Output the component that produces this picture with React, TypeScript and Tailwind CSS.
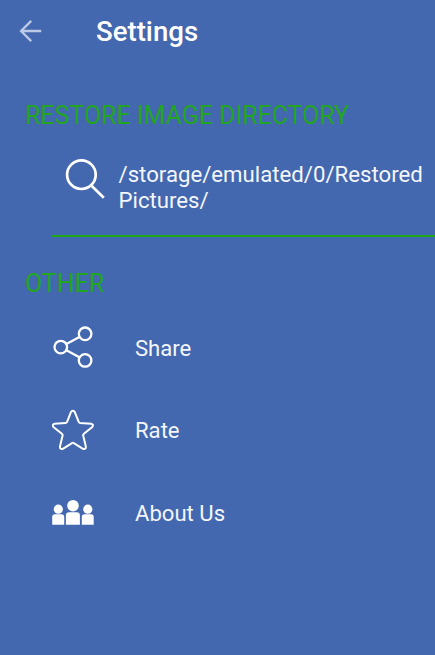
import React from "react";

function BackIcon() {
  return (
    <svg className="h-6 w-6 shrink-0" viewBox="0 0 24 24" fill="none" stroke="#bdcae5" strokeWidth="2.3">
      <path d="M23.2 12H3.2M13.2 1.9L3.1 12l10.1 10.1" />
    </svg>
  );
}

function SearchIcon() {
  return (
    <svg className="h-[42px] w-[42px] shrink-0" viewBox="0 0 42 42" fill="none" stroke="white" strokeWidth="2.7">
      <circle cx="17.4" cy="16.7" r="14.3" />
      <path d="M27 27.3L39.8 39.8" />
    </svg>
  );
}

function ShareIcon() {
  return (
    <svg className="h-[42px] w-[42px] shrink-0" viewBox="0 0 42 42" fill="none" stroke="white" strokeWidth="2.3">
      <circle cx="8.8" cy="21.1" r="6.3" />
      <circle cx="33.1" cy="7.8" r="6.3" />
      <circle cx="33.1" cy="34.4" r="6.3" />
      <path d="M14.4 17.9L27.4 10.9M14.4 24.3l13 7" />
    </svg>
  );
}

function StarIcon() {
  return (
    <svg className="h-[42px] w-[42px] shrink-0" viewBox="0 0 42 42" fill="none" stroke="white" strokeWidth="2" strokeLinejoin="round">
      <path d="M19 2.8Q20.9 .6 22.7 2.8L26.8 13.1Q27 13.8 28 13.9L39.2 14.7Q42 15.5 40.3 17.9L31.6 25.1Q31 25.7 31.2 26.6L33.9 37.7Q33.9 40.7 31 39.8L21.8 34.1Q20.9 33.6 20 34.1L10.8 39.8Q7.9 40.7 7.9 37.7L10.6 26.6Q10.8 25.7 10.2 25.1L1.4 17.9Q-.2 15.5 2.5 14.7L13.7 13.9Q14.8 13.8 15 13.1Z" />
    </svg>
  );
}

function PeopleIcon() {
  return (
    <svg className="h-[42px] w-[42px] shrink-0" viewBox="0 0 42 42" fill="white">
      <circle cx="6.3" cy="18.2" r="4.6" />
      <circle cx="35.8" cy="18.2" r="4.6" />
      <circle cx="21" cy="14.7" r="5.8" />
      <path d="M.2 33.8V26Q.2 23.2 3 23.2H9.5Q12.2 23.2 12.2 26V33.8Z" />
      <path d="M13.9 33.8V24.4Q13.9 21.2 17.2 21.2H24.6Q27.9 21.2 27.9 24.4V33.8Z" />
      <path d="M29.8 33.8V26Q29.8 23.2 32.5 23.2H39Q41.7 23.2 41.7 26V33.8Z" />
    </svg>
  );
}

const items = [
  { label: "Share", icon: <ShareIcon /> },
  { label: "Rate", icon: <StarIcon /> },
  { label: "About Us", icon: <PeopleIcon /> },
];

export default function App() {
  return (
    <main className="h-[655px] w-[435px] overflow-hidden bg-[#4368b0] font-['Roboto',sans-serif] text-[#f4f6fb]">
      <header className="flex h-[62px] items-center pl-[18px]">
        <BackIcon />
        <h1 className="pl-[54px] pt-0.5 text-[27.6px] font-medium leading-8 text-white">Settings</h1>
      </header>
      <section className="pt-[39px]">
        <h2 className="pl-[25px] text-[24.95px] leading-[30px] text-[#22a622]">RESTORE IMAGE DIRECTORY</h2>
        <div className="ml-[52px] mt-[27px] flex h-[79px] items-start border-b-2 border-[#1fa91a] pl-3">
          <SearchIcon />
          <p className="pl-[12.5px] pt-[3px] text-[22.2px] leading-[26px]">
            /storage/emulated/0/Restored
            <br />
            Pictures/
          </p>
        </div>
      </section>
      <section className="pt-8">
        <h2 className="pl-[25px] text-[24.95px] leading-[30px] text-[#22a622]">OTHER</h2>
        <ul className="pt-[7px]">
          {items.map((item) => (
            <li key={item.label} className="flex h-[82.5px] items-center pl-[52px]">
              {item.icon}
              <span className="pl-[41px] pt-px text-[22.1px] leading-7">{item.label}</span>
            </li>
          ))}
        </ul>
      </section>
    </main>
  );
}
